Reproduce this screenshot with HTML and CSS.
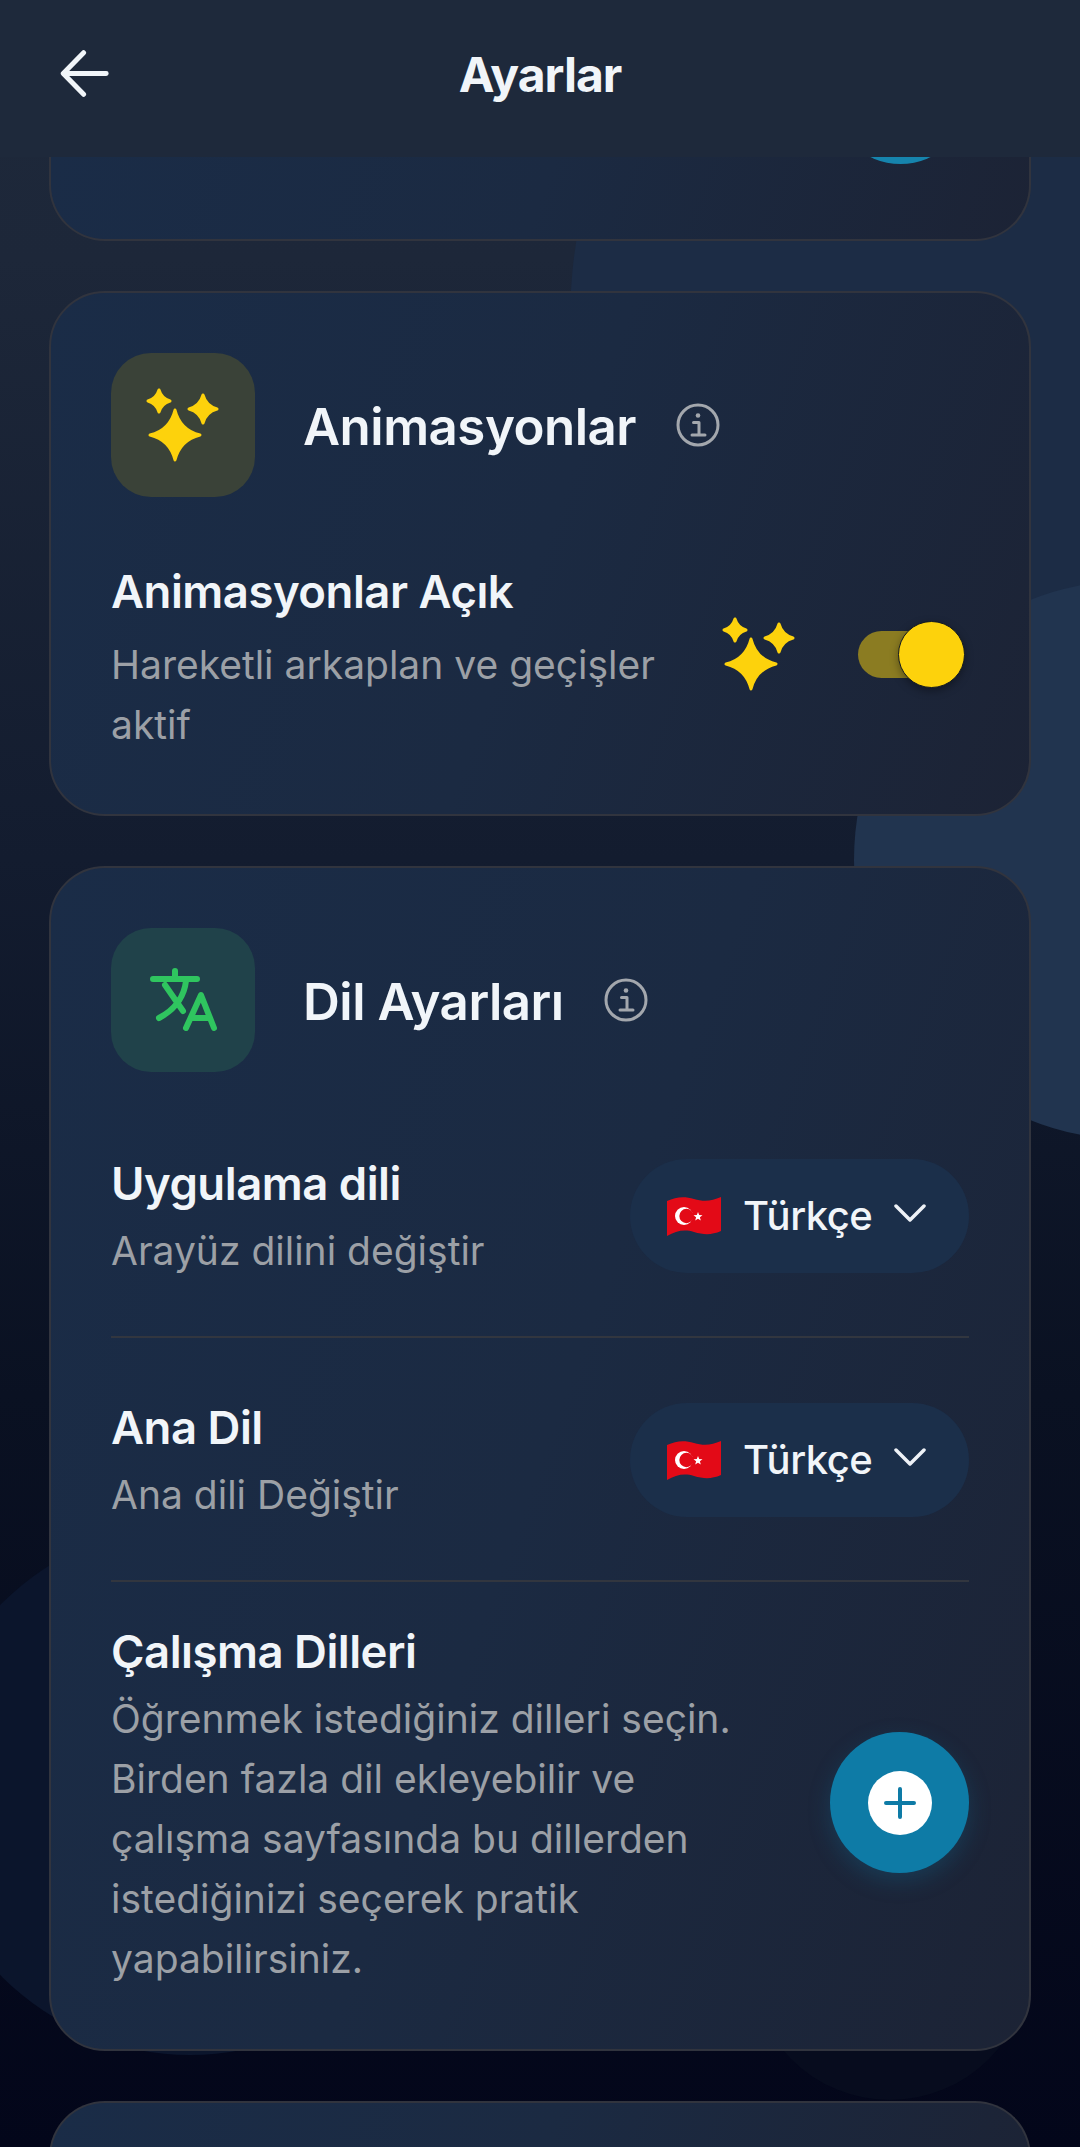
FILE: index.html
```html
<!DOCTYPE html>
<html lang="tr">
<head>
<meta charset="utf-8">
<title>Ayarlar</title>
<link rel="stylesheet" href="styles.css">
</head>
<body>
<div class="screen">
  <div class="blob blob-a"></div>
  <div class="blob blob-b"></div>
  <div class="blob blob-c"></div>
  <div class="blob blob-d"></div>

  <header class="topbar">
    <svg class="back" viewBox="0 0 54 52" fill="none" stroke="#f1f5f9" stroke-width="5.500" stroke-linecap="round" stroke-linejoin="round"><path d="M4 26h47M26 3 3.500 26 26 49"/></svg>
    <h1 class="topbar-title">Ayarlar</h1>
  </header>

  <main class="content">
    <section class="card card-clipped"><span class="peek"></span></section>

    <section class="card">
      <div class="card-head">
        <div class="icon-box icon-yellow">
          <svg viewBox="0 0 144 144" class="icon-svg"><use href="#sparkles"/></svg>
        </div>
        <h2 class="card-title">Animasyonlar</h2>
        <svg class="info" viewBox="0 0 44 44"><use href="#info"/></svg>
      </div>
      <div class="row row-anim">
        <div class="row-text">
          <h3 class="row-title">Animasyonlar Açık</h3>
          <p class="row-desc">Hareketli arkaplan ve geçişler aktif</p>
        </div>
        <svg class="sparkle-inline" viewBox="24 24 96 96"><use href="#sparkles"/></svg>
        <div class="toggle"><span class="knob"></span></div>
      </div>
    </section>

    <section class="card">
      <div class="card-head">
        <div class="icon-box icon-green">
          <svg viewBox="0 0 144 144" class="icon-svg" fill="none" stroke="#2fc55f" stroke-width="6" stroke-linecap="round" stroke-linejoin="round"><path d="M42 51h44M64 43v8M54 57l18 26M75 53c-2 17-12 29-27 37M75 100l15-33 13 33M80 90h18"/></svg>
        </div>
        <h2 class="card-title">Dil Ayarları</h2>
        <svg class="info" viewBox="0 0 44 44"><use href="#info"/></svg>
      </div>

      <div class="row row-lang row-first">
        <div class="row-text">
          <h3 class="row-title">Uygulama dili</h3>
          <p class="row-desc">Arayüz dilini değiştir</p>
        </div>
        <div class="select">
          <svg class="flag" viewBox="0 0 56 40"><use href="#flag"/></svg>
          <span class="select-label">Türkçe</span>
          <svg class="chevron" viewBox="0 0 32 20" fill="none" stroke="#eef2f7" stroke-width="3.500" stroke-linecap="round" stroke-linejoin="round"><path d="M2 3l14 14L30 3"/></svg>
        </div>
      </div>

      <div class="row row-lang row-divided">
        <div class="row-text">
          <h3 class="row-title">Ana Dil</h3>
          <p class="row-desc">Ana dili Değiştir</p>
        </div>
        <div class="select">
          <svg class="flag" viewBox="0 0 56 40"><use href="#flag"/></svg>
          <span class="select-label">Türkçe</span>
          <svg class="chevron" viewBox="0 0 32 20" fill="none" stroke="#eef2f7" stroke-width="3.500" stroke-linecap="round" stroke-linejoin="round"><path d="M2 3l14 14L30 3"/></svg>
        </div>
      </div>

      <div class="row row-study row-divided">
        <div class="row-text study-text">
          <h3 class="row-title">Çalışma Dilleri</h3>
          <p class="row-desc">Öğrenmek istediğiniz dilleri seçin. Birden fazla dil ekleyebilir ve çalışma sayfasında bu dillerden istediğinizi seçerek pratik yapabilirsiniz.</p>
        </div>
        <div class="add-btn">
          <svg class="add-icon" viewBox="0 0 64 64"><circle cx="32" cy="32" r="32" fill="#fff"/><path d="M18 32h28M32 18v28" stroke="#0e7ba6" stroke-width="4" stroke-linecap="round"/></svg>
        </div>
      </div>
    </section>

    <section class="card card-next"></section>
  </main>

  <svg class="defs" width="0" height="0">
    <defs>
      <g id="sparkles" fill="#fdd20c" stroke="#fdd20c" stroke-width="3" stroke-linejoin="round">
        <path d="M64 57Q69 77 89 82 69 87 64 107 59 87 39 82 59 77 64 57Z"/>
        <path d="M48 37Q50.500 45.500 59 48 50.500 50.500 48 59 45.500 50.500 37 48 45.500 45.500 48 37Z"/>
        <path d="M92 42Q95 53 106 56 95 59 92 70 89 59 78 56 89 53 92 42Z"/>
      </g>
      <g id="info" fill="none" stroke="#a3a7ad" stroke-width="3">
        <circle cx="22" cy="22" r="20"/>
        <path d="M17.500 19.500H23V31M16 32h13" stroke-linecap="round" stroke-linejoin="round"/>
        <circle cx="22" cy="12.500" r="2.300" fill="#a3a7ad" stroke="none"/>
      </g>
      <g id="flag">
        <path d="M1 5C10 1 18 0 28 3 38 6 46 5 55 1V35C46 39 38 39 28 36 18 33 10 35 1 40Z" fill="#e30a17"/>
        <circle cx="18" cy="20" r="9" fill="#fff"/>
        <circle cx="20.500" cy="20" r="7.200" fill="#e30a17"/>
        <path d="M32 16l1.200 3 3.300.200-2.600 2.100.9 3.200-2.800-1.800-2.800 1.800.9-3.200-2.600-2.100 3.300-.2z" fill="#fff"/>
      </g>
    </defs>
  </svg>
</div>
</body>
</html>
```

FILE: styles.css
```css
* { box-sizing: border-box; }

html, body {
  margin: 0;
  padding: 0;
  background: #0a0f1e;
}

.screen {
  position: relative;
  width: 1080px;
  height: 2147px;
  overflow: hidden;
  font-family: Inter, "Noto Sans", sans-serif;
  color: #f1f5f9;
  background: linear-gradient(180deg, #1e293b 0%, #1d2739 12%, #131c2f 40%, #0a1122 65%, #03061a 100%);
}

.blob {
  position: absolute;
  border-radius: 50%;
}

.blob-a { left: 570px; top: -180px; width: 1000px; height: 1000px; background: #1c2c45; }
.blob-b { left: 854px; top: 580px; width: 560px; height: 560px; background: #21344f; }
.blob-c { left: -75px; top: 1525px; width: 530px; height: 530px; background: #0b152c; }
.blob-d { left: 750px; top: 1820px; width: 280px; height: 280px; background: #070c1e; }

.topbar {
  position: relative;
  z-index: 2;
  display: flex;
  align-items: center;
  justify-content: center;
  height: 157px;
  background: #1e293b;
}

.back {
  position: absolute;
  left: 60px;
  top: 50px;
  width: 49px;
  height: 47px;
}

.topbar-title {
  margin: 0 0 8px;
  font-size: 48px;
  line-height: 52px;
  font-weight: 700;
  letter-spacing: -1px;
}

.content {
  position: relative;
  z-index: 1;
  display: flex;
  flex-direction: column;
  gap: 50px;
  padding: 0 49px;
}

.card {
  border: 2px solid #31343e;
  border-radius: 56px;
  padding: 60px 60px 0;
  background: linear-gradient(110deg, #1a2c47 0%, #1b2a42 50%, #1c2335 100%);
}

.card-clipped {
  position: relative;
  height: 84px;
  padding: 0;
  border-top: 0;
  border-radius: 0 0 56px 56px;
  overflow: hidden;
}

.peek {
  position: absolute;
  left: 780px;
  top: -134px;
  width: 139px;
  height: 141px;
  border-radius: 50%;
  background: #1684ad;
}

.card-next {
  height: 120px;
  border-bottom: 0;
}

.card-head {
  display: flex;
  align-items: center;
}

.icon-box {
  flex: none;
  width: 144px;
  height: 144px;
  border-radius: 40px;
}

.icon-yellow { background: #3a4238; }
.icon-green { background: #20424a; }

.icon-svg {
  display: block;
  width: 144px;
  height: 144px;
}

.card-title {
  margin: 4px 0 0 48px;
  font-size: 51px;
  line-height: 60px;
  font-weight: 600;
  letter-spacing: -0.500px;
}

.info {
  flex: none;
  width: 44px;
  height: 44px;
  margin-left: 40px;
}

.row {
  display: flex;
  align-items: center;
}

.row-text { flex: 1 1 auto; min-width: 0; }

.row-title {
  margin: 0 0 9px;
  font-size: 45.500px;
  line-height: 56px;
  font-weight: 600;
  letter-spacing: -0.500px;
}

.row-desc {
  margin: 0;
  font-size: 39px;
  line-height: 60px;
  color: #9ca0a6;
}

.row-anim {
  padding: 67px 0 59px;
}

.row-anim .row-text { width: 560px; flex: none; }
.row-anim .row-title { margin-bottom: 15px; }

.sparkle-inline {
  flex: none;
  width: 96px;
  height: 96px;
  margin: -11px 0 0 40px;
}

.toggle {
  position: relative;
  flex: none;
  width: 102px;
  height: 47px;
  margin: -11px 0 0 51px;
  border-radius: 24px;
  background: #8b7c22;
}

.knob {
  position: absolute;
  right: -5px;
  top: -10px;
  width: 67px;
  height: 67px;
  border-radius: 50%;
  background: #fdd20c;
  border: 1px solid #141a20;
  box-shadow: 0 3px 8px rgba(0, 0, 0, 0.35);
}

.row-lang {
  justify-content: space-between;
  padding: 62px 0 55px;
}

.row-first { padding-top: 84px; }

.row-divided { border-top: 2px solid #32363f; }

.select {
  flex: none;
  display: flex;
  align-items: center;
  width: 339px;
  height: 114px;
  margin-bottom: 6px;
  padding-left: 36px;
  border-radius: 57px;
  background: #1b2f4a;
}

.flag {
  flex: none;
  width: 56px;
  height: 40px;
  margin-right: 21px;
}

.select-label {
  font-size: 40px;
  line-height: 52px;
  font-weight: 500;
  letter-spacing: -0.500px;
}

.chevron {
  flex: none;
  width: 32px;
  height: 20px;
  margin: -6px 0 0 22px;
}

.row-study {
  justify-content: space-between;
  padding: 42px 0 60px;
}

.study-text { width: 640px; flex: none; }

.add-btn {
  flex: none;
  display: flex;
  align-items: center;
  justify-content: center;
  width: 139px;
  height: 141px;
  margin-top: -8px;
  border-radius: 50%;
  background: #0e7ba6;
  box-shadow: 0 8px 22px rgba(14, 123, 166, 0.25);
}

.add-icon {
  display: block;
  width: 64px;
  height: 64px;
}

.defs { position: absolute; }
```
